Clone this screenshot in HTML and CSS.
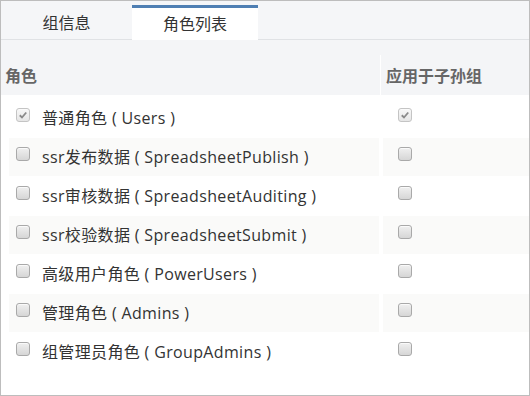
FILE: index.html
```html
<!DOCTYPE html>
<html lang="zh-CN">
<head>
<meta charset="utf-8">
<link rel="stylesheet" href="styles.css">
</head>
<body>
<div class="frame">
  <div class="tabs">
    <div class="tab">组信息</div>
    <div class="tab active">角色列表</div>
  </div>
  <div class="head-wrap">
    <div class="head">
      <div class="hcell">角色</div>
      <div class="hcell sep">应用于子孙组</div>
    </div>
  </div>
  <div class="rows">
    <div class="row">
      <div class="cell role"><span class="cb checked"><svg viewBox="0 0 13 13"><path d="M3 6.8 L5.4 9.2 L10 3.8" fill="none" stroke="#8a8a8a" stroke-width="2"/></svg></span><span class="label">普通角色 ( Users )</span></div>
      <div class="cell apply"><span class="cb checked"><svg viewBox="0 0 13 13"><path d="M3 6.8 L5.4 9.2 L10 3.8" fill="none" stroke="#8a8a8a" stroke-width="2"/></svg></span></div>
    </div>
    <div class="row stripe">
      <div class="cell role"><span class="cb"></span><span class="label">ssr发布数据 ( SpreadsheetPublish )</span></div>
      <div class="cell apply"><span class="cb"></span></div>
    </div>
    <div class="row">
      <div class="cell role"><span class="cb"></span><span class="label">ssr审核数据 ( SpreadsheetAuditing )</span></div>
      <div class="cell apply"><span class="cb"></span></div>
    </div>
    <div class="row stripe">
      <div class="cell role"><span class="cb"></span><span class="label">ssr校验数据 ( SpreadsheetSubmit )</span></div>
      <div class="cell apply"><span class="cb"></span></div>
    </div>
    <div class="row">
      <div class="cell role"><span class="cb"></span><span class="label">高级用户角色 ( PowerUsers )</span></div>
      <div class="cell apply"><span class="cb"></span></div>
    </div>
    <div class="row stripe">
      <div class="cell role"><span class="cb"></span><span class="label">管理角色 ( Admins )</span></div>
      <div class="cell apply"><span class="cb"></span></div>
    </div>
    <div class="row">
      <div class="cell role"><span class="cb"></span><span class="label">组管理员角色 ( GroupAdmins )</span></div>
      <div class="cell apply"><span class="cb"></span></div>
    </div>
  </div>
</div>
</body>
</html>
```
FILE: styles.css
```css
html, body {
  margin: 0;
  padding: 0;
  background: #fff;
}
.frame {
  width: 528px;
  height: 394px;
  border: 1px solid #bdbdbd;
  background: #fff;
  font-family: "Open Sans", "Noto Sans CJK SC", sans-serif;
  font-size: 16px;
  color: #333;
  overflow: hidden;
}
.tabs {
  display: flex;
  height: 38px;
  background: #f5f6f8;
  border-bottom: 1px solid #e0e2e5;
}
.tab {
  width: 131px;
  text-align: center;
  line-height: 32px;
  padding-top: 6px;
  color: #333;
}
.tab.active {
  width: 126px;
  margin-top: 4px;
  padding-top: 0;
  line-height: 32px;
  background: #fff;
  border-top: 3px solid #4f7fb3;
  margin-bottom: -1px;
  height: 32px;
}
.head-wrap {
  background: #f4f5f7;
  padding-top: 15px;
}
.head {
  display: grid;
  grid-template-columns: 379px 1fr;
  height: 40px;
}
.hcell {
  font-weight: bold;
  color: #666;
  line-height: 42px;
  padding-left: 4px;
}
.hcell.sep {
  border-left: 1px solid #fff;
  padding-left: 5px;
}
.rows {
  padding-top: 4px;
}
.row {
  display: grid;
  grid-template-columns: 370px 1fr;
  column-gap: 4px;
  height: 39px;
  padding-left: 8px;
}
.cell {
  display: flex;
  align-items: flex-start;
  margin: 0 0 2px 0;
}
.stripe .cell {
  background: #fafaf9;
}
.cell.role {
  padding-left: 7px;
}
.cell.apply {
  padding-left: 15px;
}
.cb {
  display: block;
  box-sizing: border-box;
  width: 14px;
  height: 14px;
  margin-top: 9px;
  border: 1px solid #a9a9a9;
  border-radius: 3px;
  background: linear-gradient(#f0f0f0, #d6d6d6);
  box-shadow: inset 0 1px 0 #fafafa;
  flex: none;
}
.cb svg {
  display: block;
  width: 12px;
  height: 12px;
}
.cb.checked {
  border-color: #c4c4c4;
  background: linear-gradient(#f8f8f8, #e6e6e6);
}
.label {
  margin-left: 12px;
  line-height: 38px;
  white-space: nowrap;
  letter-spacing: 0.35px;
}
```
